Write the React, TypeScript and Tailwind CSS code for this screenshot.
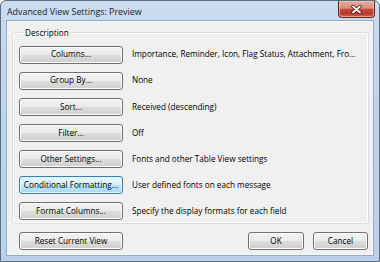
const FONT = 'font-["Open_Sans","Liberation_Sans",sans-serif]';

const rows = [
  { label: 'Columns...', text: 'Importance, Reminder, Icon, Flag Status, Attachment, Fro...' },
  { label: 'Group By...', text: 'None' },
  { label: 'Sort...', text: 'Received (descending)' },
  { label: 'Filter...', text: 'Off' },
  { label: 'Other Settings...', text: 'Fonts and other Table View settings' },
  { label: 'Conditional Formatting...', text: 'User defined fonts on each message', focused: true },
  { label: 'Format Columns...', text: 'Specify the display formats for each field' },
];

function WinButton({
  children,
  width,
  focused,
}: {
  children: React.ReactNode;
  width: string;
  focused?: boolean;
}) {
  return (
    <div
      className={`${width} h-[18px] shrink-0 flex items-center justify-center rounded-[3px] border text-[8.2px] leading-none text-black whitespace-nowrap ${
        focused
          ? 'border-[#3c7fb1] bg-[linear-gradient(to_bottom,#eaf6fd_0%,#d9f0fc_50%,#bee6fd_51%,#a7d9f5_100%)] shadow-[inset_0_0_0_1px_#e6f4fc]'
          : 'border-[#707070] bg-[linear-gradient(to_bottom,#f2f2f2_0%,#ebebeb_50%,#dddddd_51%,#cfcfcf_100%)] shadow-[inset_0_0_0_1px_#fcfcfc]'
      }`}
    >
      {children}
    </div>
  );
}

function CloseButton() {
  return (
    <div className="w-[37px] h-[17px] mr-[4px] flex items-center justify-center rounded-b-[4px] border border-t-0 border-[#6b2218] bg-[linear-gradient(to_bottom,#e6aa9e_0%,#d98f80_45%,#c4493a_52%,#b8382a_80%,#d3705a_100%)] shadow-[inset_0_0_0_1px_rgba(255,220,210,0.5)]">
      <svg width="11" height="9" viewBox="0 0 11 9">
        <path d="M2 1.5 L9 7.5 M9 1.5 L2 7.5" stroke="#4a1510" strokeWidth="3.4" strokeLinecap="round" />
        <path d="M2 1.5 L9 7.5 M9 1.5 L2 7.5" stroke="#ffffff" strokeWidth="1.8" strokeLinecap="round" />
      </svg>
    </div>
  );
}

export default function App() {
  return (
    <div className={`w-[380px] h-[262px] flex flex-col rounded-t-[6px] border border-[#5d6e80] bg-[linear-gradient(to_bottom,#cadcf0_0%,#bfd5eb_40%,#bad1e9_100%)] ${FONT}`}>
      {/* title bar */}
      <div className="h-[20px] flex items-start justify-between">
        <div className="pl-[6px] pt-[5px] text-[8.9px] leading-[12px] text-[#1b1b1b]">
          Advanced View Settings: Preview
        </div>
        <CloseButton />
      </div>

      {/* client area */}
      <div className="flex-1 mx-[6px] mb-[6px] flex flex-col border border-[#f4f8fc] outline outline-1 outline-[#93aac2] bg-[#f0f0f0] pl-[4px] pr-[3px] pt-[5px]">
        <fieldset className="border border-[#d5dfe5] rounded-[3px] shadow-[inset_0_0_0_1px_#ffffff] pl-[6px] pr-[4px] pb-[3px]">
          <legend className="ml-[4px] px-[2px] text-[8.2px] leading-[11px] text-black">Description</legend>
          <div className="flex flex-col gap-[8.1px] pt-[7.5px]">
            {rows.map((r) => (
              <div key={r.label} className="flex items-center gap-[9px]">
                <WinButton width="w-[104px]" focused={r.focused}>
                  {r.label}
                </WinButton>
                <div className="text-[8.2px] leading-none text-black whitespace-nowrap">{r.text}</div>
              </div>
            ))}
          </div>
        </fieldset>

        <div className="flex items-center justify-between pl-[7px] pr-[1px] mt-[8px]">
          <WinButton width="w-[104px]">Reset Current View</WinButton>
          <div className="flex gap-[9px]">
            <WinButton width="w-[56px]">OK</WinButton>
            <WinButton width="w-[55px]">Cancel</WinButton>
          </div>
        </div>
      </div>
    </div>
  );
}
